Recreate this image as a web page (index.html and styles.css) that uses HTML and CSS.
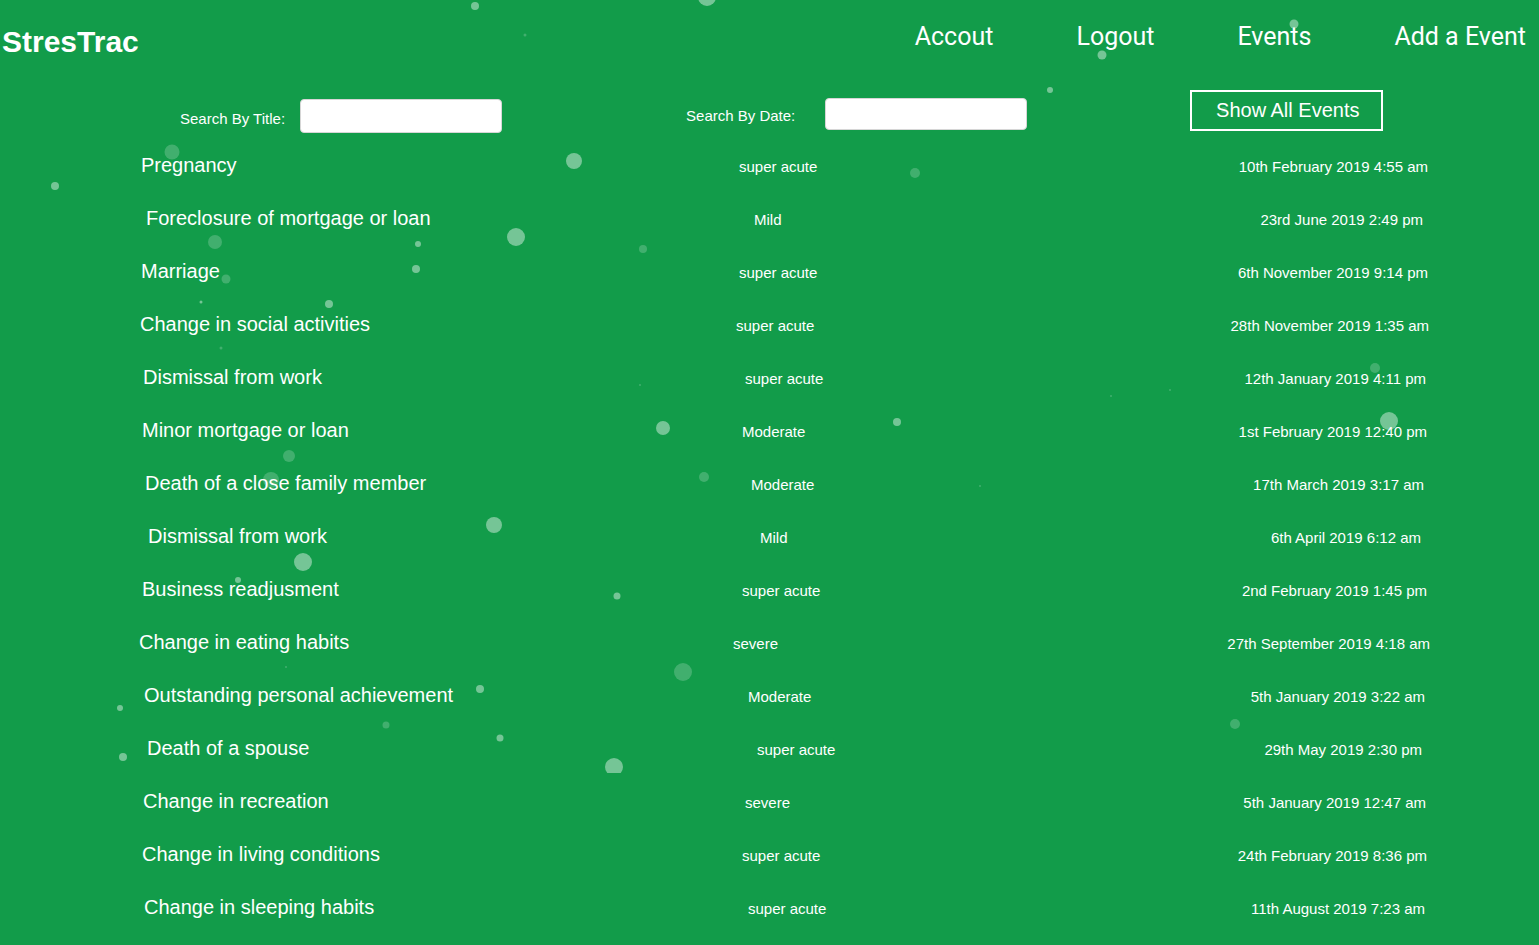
FILE: index.html
```html
<!DOCTYPE html>
<html lang="en">
<head>
<meta charset="utf-8">
<title>StresTrac</title>
<link rel="stylesheet" href="styles.css">
</head>
<body>
<div class="page">
  <header class="topbar">
    <div class="logo">StresTrac</div>
    <nav class="nav">
      <a href="#">Accout</a>
      <a href="#">Logout</a>
      <a href="#">Events</a>
      <a href="#">Add a Event</a>
    </nav>
  </header>

  <section class="search">
    <label class="label label-title">Search By Title:</label>
    <input class="field field-title" type="text">
    <label class="label label-date">Search By Date:</label>
    <input class="field field-date" type="text">
    <button class="show-all">Show All Events</button>
  </section>

  <ul class="events">
    <li class="row"><span class="title">Pregnancy</span><span class="sev">super acute</span><span class="date">10th February 2019 4:55 am</span></li>
    <li class="row"><span class="title">Foreclosure of mortgage or loan</span><span class="sev">Mild</span><span class="date">23rd June 2019 2:49 pm</span></li>
    <li class="row"><span class="title">Marriage</span><span class="sev">super acute</span><span class="date">6th November 2019 9:14 pm</span></li>
    <li class="row"><span class="title">Change in social activities</span><span class="sev">super acute</span><span class="date">28th November 2019 1:35 am</span></li>
    <li class="row"><span class="title">Dismissal from work</span><span class="sev">super acute</span><span class="date">12th January 2019 4:11 pm</span></li>
    <li class="row"><span class="title">Minor mortgage or loan</span><span class="sev">Moderate</span><span class="date">1st February 2019 12:40 pm</span></li>
    <li class="row"><span class="title">Death of a close family member</span><span class="sev">Moderate</span><span class="date">17th March 2019 3:17 am</span></li>
    <li class="row"><span class="title">Dismissal from work</span><span class="sev">Mild</span><span class="date">6th April 2019 6:12 am</span></li>
    <li class="row"><span class="title">Business readjusment</span><span class="sev">super acute</span><span class="date">2nd February 2019 1:45 pm</span></li>
    <li class="row"><span class="title">Change in eating habits</span><span class="sev">severe</span><span class="date">27th September 2019 4:18 am</span></li>
    <li class="row"><span class="title">Outstanding personal achievement</span><span class="sev">Moderate</span><span class="date">5th January 2019 3:22 am</span></li>
    <li class="row"><span class="title">Death of a spouse</span><span class="sev">super acute</span><span class="date">29th May 2019 2:30 pm</span></li>
    <li class="row"><span class="title">Change in recreation</span><span class="sev">severe</span><span class="date">5th January 2019 12:47 am</span></li>
    <li class="row"><span class="title">Change in living conditions</span><span class="sev">super acute</span><span class="date">24th February 2019 8:36 pm</span></li>
    <li class="row"><span class="title">Change in sleeping habits</span><span class="sev">super acute</span><span class="date">11th August 2019 7:23 am</span></li>
  </ul>

  <svg class="particles" width="1539" height="945" viewBox="0 0 1539 945" aria-hidden="true">
    <defs>
      <clipPath id="cut"><rect x="0" y="0" width="1539" height="773"/></clipPath>
    </defs>
    <g class="bright">
      <circle cx="475" cy="6" r="4"/>
      <circle cx="707" cy="-3" r="9"/>
      <circle cx="1102" cy="55" r="4.5"/>
      <circle cx="1050" cy="90" r="3"/>
      <circle cx="1294" cy="24" r="4.5"/>
      <circle cx="574" cy="161" r="8"/>
      <circle cx="55" cy="186" r="4"/>
      <circle cx="516" cy="237" r="9"/>
      <circle cx="418" cy="244" r="3"/>
      <circle cx="416" cy="269" r="4"/>
      <circle cx="329" cy="304" r="4"/>
      <circle cx="201" cy="302" r="1.5"/>
      <circle cx="663" cy="428" r="7"/>
      <circle cx="897" cy="422" r="4"/>
      <circle cx="1389" cy="421" r="9"/>
      <circle cx="494" cy="525" r="8"/>
      <circle cx="303" cy="562" r="9"/>
      <circle cx="238" cy="580" r="3"/>
      <circle cx="617" cy="596" r="3.5"/>
      <circle cx="480" cy="689" r="4"/>
      <circle cx="120" cy="708" r="3"/>
      <circle cx="500" cy="738" r="3.5"/>
      <circle cx="123" cy="757" r="4"/>
      <circle cx="614" cy="767" r="9" clip-path="url(#cut)"/>
    </g>
    <g class="dim">
      <circle cx="525" cy="35" r="1.5"/>
      <circle cx="172" cy="152" r="7.5"/>
      <circle cx="915" cy="173" r="5"/>
      <circle cx="215" cy="242" r="7"/>
      <circle cx="643" cy="249" r="4"/>
      <circle cx="226" cy="279" r="4.5"/>
      <circle cx="221" cy="348" r="1.5"/>
      <circle cx="640" cy="385" r="1"/>
      <circle cx="1375" cy="368" r="5"/>
      <circle cx="1170" cy="390" r="1"/>
      <circle cx="1111" cy="396" r="1"/>
      <circle cx="289" cy="456" r="6"/>
      <circle cx="271" cy="480" r="8"/>
      <circle cx="704" cy="477" r="5"/>
      <circle cx="980" cy="486" r="1"/>
      <circle cx="683" cy="672" r="9"/>
      <circle cx="286" cy="667" r="1"/>
      <circle cx="386" cy="725" r="3.5"/>
      <circle cx="1235" cy="724" r="5"/>
      <circle cx="1224" cy="110" r="3"/>
    </g>
  </svg>
</div>
</body>
</html>
```

FILE: styles.css
```css
* {
  box-sizing: border-box;
}

html, body {
  margin: 0;
  padding: 0;
  background: #129c4a;
  overflow: hidden;
}

.page {
  position: relative;
  width: 1539px;
  height: 945px;
  color: #ffffff;
  font-family: "Liberation Sans", Arial, sans-serif;
}

/* Header */
.topbar {
  display: flex;
  justify-content: space-between;
  align-items: flex-start;
  height: 90px;
  padding: 0 13px 0 2px;
}

.logo {
  margin-top: 24px;
  font-size: 30px;
  font-weight: 700;
  line-height: 35px;
}

.nav {
  display: flex;
  gap: 83px;
  margin-top: 22px;
  font-family: Roboto, "Liberation Sans", sans-serif;
  font-size: 25px;
  line-height: 29px;
}

.nav a {
  color: #ffffff;
  text-decoration: none;
}

/* Search row */
.search {
  display: flex;
  align-items: flex-start;
  height: 49px;
  padding-left: 180px;
}

.label {
  font-size: 15px;
  line-height: 18px;
}

.label-title {
  margin-top: 20px;
}

.label-date {
  margin-top: 17px;
  margin-left: 184px;
}

.field {
  width: 202px;
  background: #ffffff;
  border: 1px solid #d6d6d6;
  border-radius: 4px;
  padding: 0 6px;
  font-size: 15px;
  outline: none;
}

.field-title {
  height: 34px;
  margin-top: 9px;
  margin-left: 15px;
}

.field-date {
  height: 32px;
  margin-top: 8px;
  margin-left: 30px;
}

.show-all {
  width: 193px;
  height: 41px;
  margin-left: 163px;
  background: transparent;
  border: 2px solid #ffffff;
  color: #ffffff;
  font-family: "Liberation Sans", Arial, sans-serif;
  font-size: 20px;
  padding: 0 0 0 2px;
  cursor: pointer;
}

/* Event list */
.events {
  list-style: none;
  margin: 0;
  padding: 0;
}

.row {
  --j: 0px;
  display: flex;
  align-items: baseline;
  height: 53px;
  line-height: 53px;
}

.title {
  flex: none;
  margin-left: calc(139px + var(--j));
  width: calc(594px - var(--j));
  font-size: 20px;
  white-space: nowrap;
}

.sev {
  flex: none;
  margin-left: calc(var(--j) * 3);
  font-size: 15px;
  white-space: nowrap;
}

.date {
  flex: none;
  margin-left: auto;
  margin-right: calc(109px + var(--j));
  font-size: 15px;
  white-space: nowrap;
}

.row:nth-child(1)  { --j: 2px; }
.row:nth-child(2)  { --j: 7px; }
.row:nth-child(3)  { --j: 2px; }
.row:nth-child(4)  { --j: 1px; }
.row:nth-child(5)  { --j: 4px; }
.row:nth-child(6)  { --j: 3px; }
.row:nth-child(7)  { --j: 6px; }
.row:nth-child(8)  { --j: 9px; }
.row:nth-child(9)  { --j: 3px; }
.row:nth-child(10) { --j: 0px; }
.row:nth-child(11) { --j: 5px; }
.row:nth-child(12) { --j: 8px; }
.row:nth-child(13) { --j: 4px; }
.row:nth-child(14) { --j: 3px; }
.row:nth-child(15) { --j: 5px; }

/* Floating particles */
.particles {
  position: absolute;
  left: 0;
  top: 0;
  pointer-events: none;
}

.particles .bright circle {
  fill: rgba(255, 255, 255, 0.42);
}

.particles .dim circle {
  fill: rgba(255, 255, 255, 0.2);
}
```
